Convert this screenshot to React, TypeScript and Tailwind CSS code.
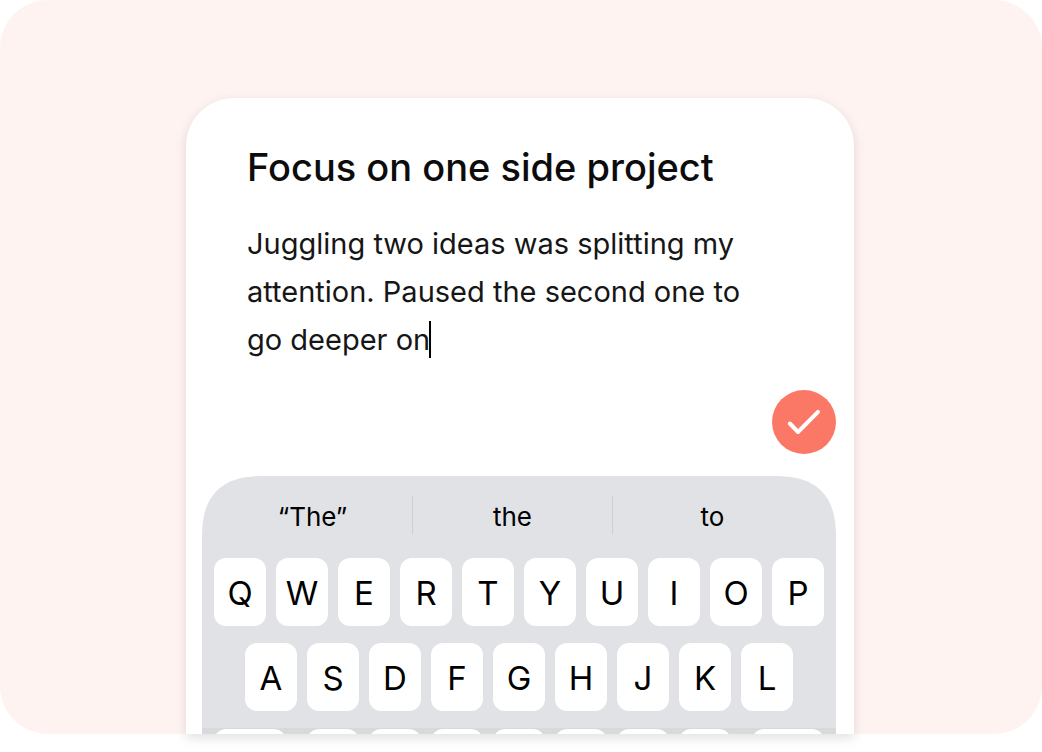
const suggestions = ["“The”", "the", "to"];

const topRow = ["Q", "W", "E", "R", "T", "Y", "U", "I", "O", "P"];
const middleRow = ["A", "S", "D", "F", "G", "H", "J", "K", "L"];
const bottomRow = ["Z", "X", "C", "V", "B", "N", "M"];

const noteText =
  "Juggling two ideas was splitting my attention. Paused the second one to go deeper on";

const Key = ({ letter }: { letter: string }) => (
  <button
    type="button"
    className="flex-1 h-[68px] rounded-xl bg-white pt-0.5 text-[33px] leading-none text-black"
  >
    {letter}
  </button>
);

const Keyboard = () => {
  return (
    <div className="ml-4 mr-[18px] overflow-hidden rounded-t-[64px] bg-[#e1e2e6] [corner-shape:superellipse(1.4)]">
      <div className="grid grid-cols-3 pl-[11px] pr-[23px] pt-5 pb-6">
        {suggestions.map((word) => (
          <button
            type="button"
            key={word}
            className="h-[38px] border-r border-[#cfd0d3] pt-1 text-[26px] leading-none text-black last:border-transparent"
          >
            {word}
          </button>
        ))}
      </div>

      <div className="flex gap-2.5 px-3">
        {topRow.map((letter) => (
          <Key letter={letter} key={letter} />
        ))}
      </div>

      <div className="flex gap-2.5 px-[43px] pt-[17px] pb-[17px]">
        {middleRow.map((letter) => (
          <Key letter={letter} key={letter} />
        ))}
      </div>

      {/* Only the tops of these keys peek out */}
      <div className="flex h-[6px] gap-[21px] overflow-hidden bg-[#d8d9db] px-3 pt-px">
        <button
          type="button"
          aria-label="Shift"
          className="h-[68px] w-[72px] rounded-xl bg-white"
        />
        <div className="flex flex-1 gap-2.5">
          {bottomRow.map((letter) => (
            <button
              type="button"
              key={letter}
              aria-label={letter}
              className="h-[68px] flex-1 rounded-xl bg-white"
            />
          ))}
        </div>
        <button
          type="button"
          aria-label="Delete"
          className="h-[68px] w-[72px] rounded-xl bg-white"
        />
      </div>
    </div>
  );
};

const App = () => {
  return (
    <main className="bg-white pb-[18px] font-['Inter',sans-serif]">
      <section className="rounded-[48px] bg-[#fef3f0] pl-4 pr-[18px] pt-[98px]">
        <div className="mx-auto w-full max-w-[668px] rounded-t-[48px] bg-white shadow-[0_4px_12px_rgba(0,0,0,0.12)]">
          <div className="pl-[61px] pr-[76px] pt-[45px]">
            <h1
              id="note-title"
              className="text-[38px] font-medium leading-[48px] text-[#0c0c0c]"
            >
              Focus on one side project
            </h1>
            <div className="relative mt-[29px]">
              <textarea
                aria-labelledby="note-title"
                rows={3}
                spellCheck={false}
                defaultValue={noteText}
                className="block w-full resize-none overflow-hidden text-[29px] leading-[48px] text-[#161616] outline-none"
              />
              {/* Text caret */}
              <span className="absolute left-[182px] top-[101px] h-[37px] w-0.5 bg-black" />
            </div>
          </div>

          <div className="flex justify-end pb-[22px] pr-[18px] pt-[26px]">
            <button
              type="button"
              aria-label="Save"
              className="flex size-16 items-center justify-center rounded-full bg-[#fc7866]"
            >
              <svg
                width="64"
                height="64"
                viewBox="0 0 64 64"
                fill="none"
                stroke="white"
                strokeWidth="4"
                strokeLinecap="round"
                strokeLinejoin="round"
              >
                <path d="M17.8 33.5 26 42 46 21.8" />
              </svg>
            </button>
          </div>

          <Keyboard />
        </div>
      </section>
    </main>
  );
};

export default App;
